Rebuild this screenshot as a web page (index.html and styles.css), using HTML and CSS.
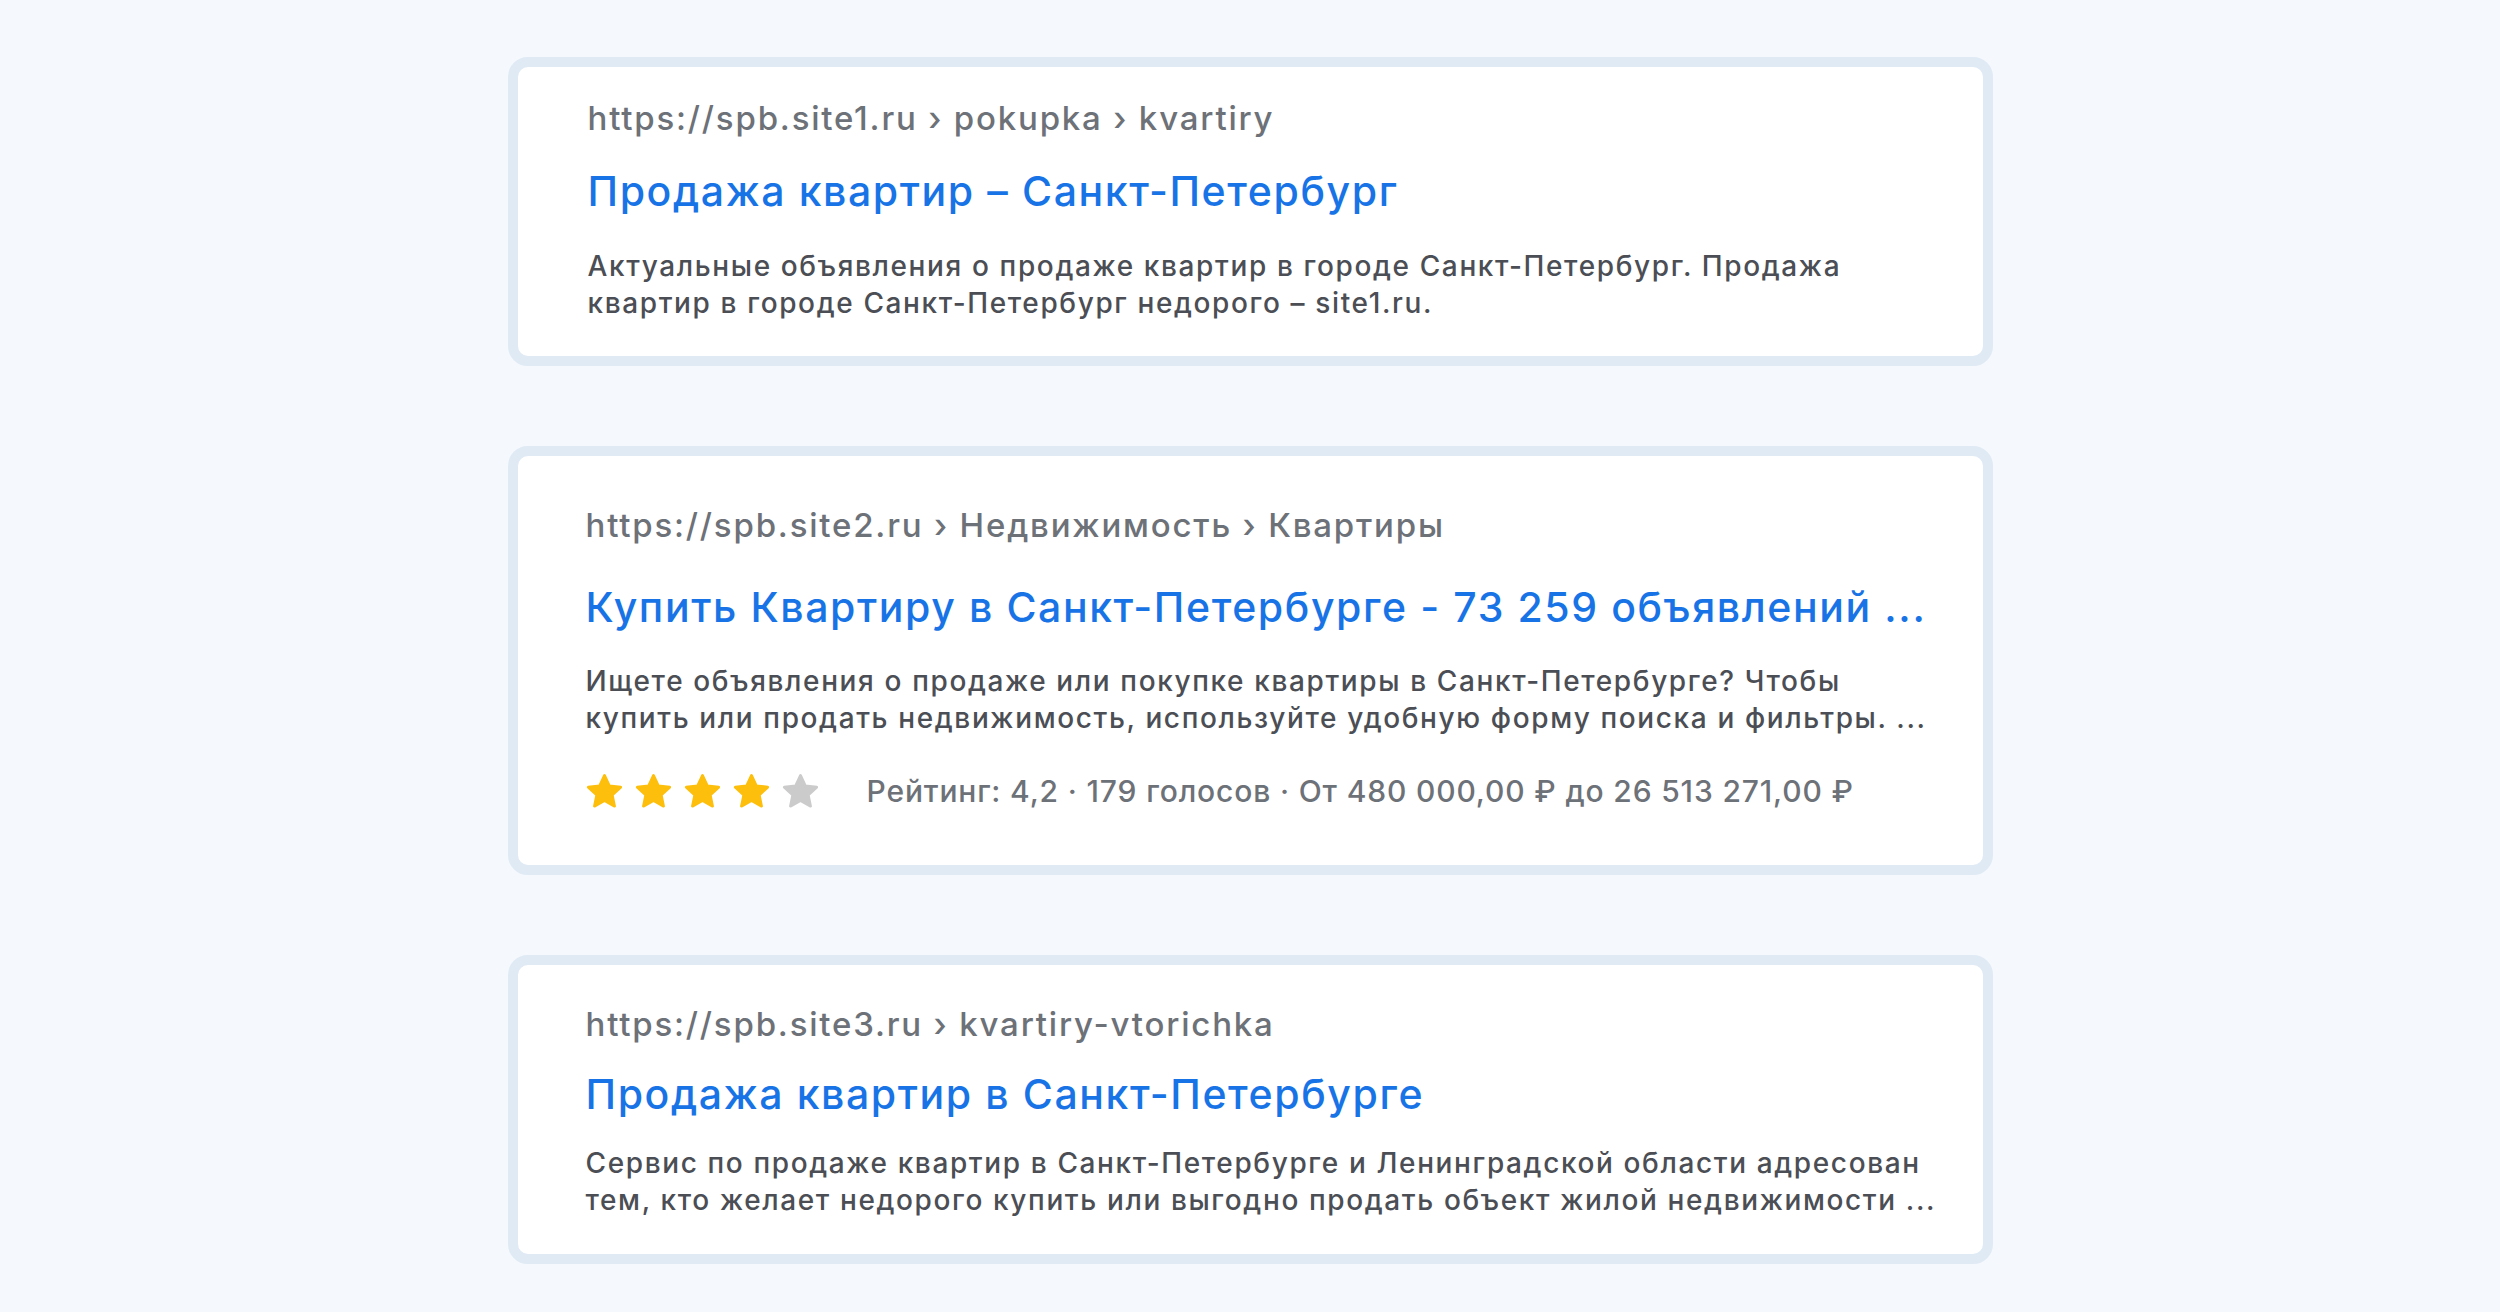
FILE: index.html
```html
<!DOCTYPE html>
<html lang="ru">
<head>
<meta charset="utf-8">
<title>Результаты поиска</title>
<link rel="stylesheet" href="styles.css">
</head>
<body>
<main class="results">
  <article class="card card--one">
    <div class="url">https://spb.site1.ru › pokupka › kvartiry</div>
    <a class="title" href="#">Продажа квартир – Санкт-Петербург</a>
    <p class="desc">Актуальные объявления о продаже квартир в городе Санкт-Петербург. Продажа<br>квартир в городе Санкт-Петербург недорого – site1.ru.</p>
  </article>

  <article class="card card--two">
    <div class="url">https://spb.site2.ru › Недвижимость › Квартиры</div>
    <a class="title" href="#">Купить Квартиру в Санкт-Петербурге - 73 259 объявлений ...</a>
    <p class="desc">Ищете объявления о продаже или покупке квартиры в Санкт-Петербурге? Чтобы<br>купить или продать недвижимость, используйте удобную форму поиска и фильтры. ...</p>
    <div class="rating">
      <div class="stars">
        <svg class="star star--on" viewBox="0 0 24 24"><path d="M12 2.6l2.85 6.1 6.65.75-4.95 4.55 1.35 6.6L12 17.3l-5.9 3.3 1.35-6.6L2.5 9.45l6.65-.75z"/></svg>
        <svg class="star star--on" viewBox="0 0 24 24"><path d="M12 2.6l2.85 6.1 6.65.75-4.95 4.55 1.35 6.6L12 17.3l-5.9 3.3 1.35-6.6L2.5 9.45l6.65-.75z"/></svg>
        <svg class="star star--on" viewBox="0 0 24 24"><path d="M12 2.6l2.85 6.1 6.65.75-4.95 4.55 1.35 6.6L12 17.3l-5.9 3.3 1.35-6.6L2.5 9.45l6.65-.75z"/></svg>
        <svg class="star star--on" viewBox="0 0 24 24"><path d="M12 2.6l2.85 6.1 6.65.75-4.95 4.55 1.35 6.6L12 17.3l-5.9 3.3 1.35-6.6L2.5 9.45l6.65-.75z"/></svg>
        <svg class="star star--off" viewBox="0 0 24 24"><path d="M12 2.6l2.85 6.1 6.65.75-4.95 4.55 1.35 6.6L12 17.3l-5.9 3.3 1.35-6.6L2.5 9.45l6.65-.75z"/></svg>
      </div>
      <span class="rating-text">Рейтинг: 4,2 · 179 голосов · От 480 000,00 ₽ до 26 513 271,00 ₽</span>
    </div>
  </article>

  <article class="card card--three">
    <div class="url">https://spb.site3.ru › kvartiry-vtorichka</div>
    <a class="title" href="#">Продажа квартир в Санкт-Петербурге</a>
    <p class="desc">Сервис по продаже квартир в Санкт-Петербурге и Ленинградской области адресован<br>тем, кто желает недорого купить или выгодно продать объект жилой недвижимости ...</p>
  </article>
</main>
</body>
</html>
```

FILE: styles.css
```css
* { box-sizing: border-box; }

html, body {
  margin: 0;
  padding: 0;
}

body {
  background: #f5f8fc;
  font-family: "Inter", "Noto Sans", "Liberation Sans", sans-serif;
  font-weight: 500;
  width: 2500px;
  height: 1312px;
  overflow: hidden;
}

.results {
  display: flex;
  flex-direction: column;
  align-items: center;
  gap: 80px;
  padding-top: 57px;
}

.card {
  width: 1485px;
  background: #ffffff;
  border: 10px solid #dfeaf4;
  border-radius: 20px;
  display: flex;
  flex-direction: column;
  align-items: flex-start;
  padding-left: 68px;
  padding-right: 20px;
}

.card--one { padding-top: 31px; padding-bottom: 34px; padding-left: 70px; }
.card--two { padding-top: 49px; padding-bottom: 54px; }
.card--three { padding-top: 39px; padding-bottom: 35px; }

.url {
  font-size: 33px;
  line-height: 40px;
  letter-spacing: 1.8px;
  color: #6d7178;
  white-space: nowrap;
}

.title {
  display: block;
  font-size: 41px;
  line-height: 50px;
  letter-spacing: 1.6px;
  color: #1874e6;
  text-decoration: none;
  white-space: nowrap;
}

.desc {
  margin: 0;
  font-size: 28px;
  line-height: 37px;
  letter-spacing: 1.62px;
  color: #4b4e54;
  white-space: nowrap;
}

.card--one .title { margin-top: 28px; }
.card--one .desc { margin-top: 32px; }

.card--two .title { margin-top: 37px; }
.card--two .desc { margin-top: 31px; }

.card--three .title { margin-top: 25px; }
.card--three .desc { margin-top: 26px; }

.rating {
  margin-top: 34px;
  display: flex;
  align-items: center;
  height: 40px;
}

.stars {
  display: flex;
  gap: 8px;
  margin-left: -2px;
}

.star {
  width: 41px;
  height: 41px;
  display: block;
}

.star path {
  stroke-width: 1.6;
  stroke-linejoin: round;
}

.star--on path { fill: #fdbf0c; stroke: #fdbf0c; }
.star--off path { fill: #cbcbcb; stroke: #cbcbcb; }

.rating-text {
  margin-left: 46px;
  font-size: 30px;
  line-height: 40px;
  letter-spacing: 0.85px;
  color: #6d7178;
  white-space: nowrap;
}
```
